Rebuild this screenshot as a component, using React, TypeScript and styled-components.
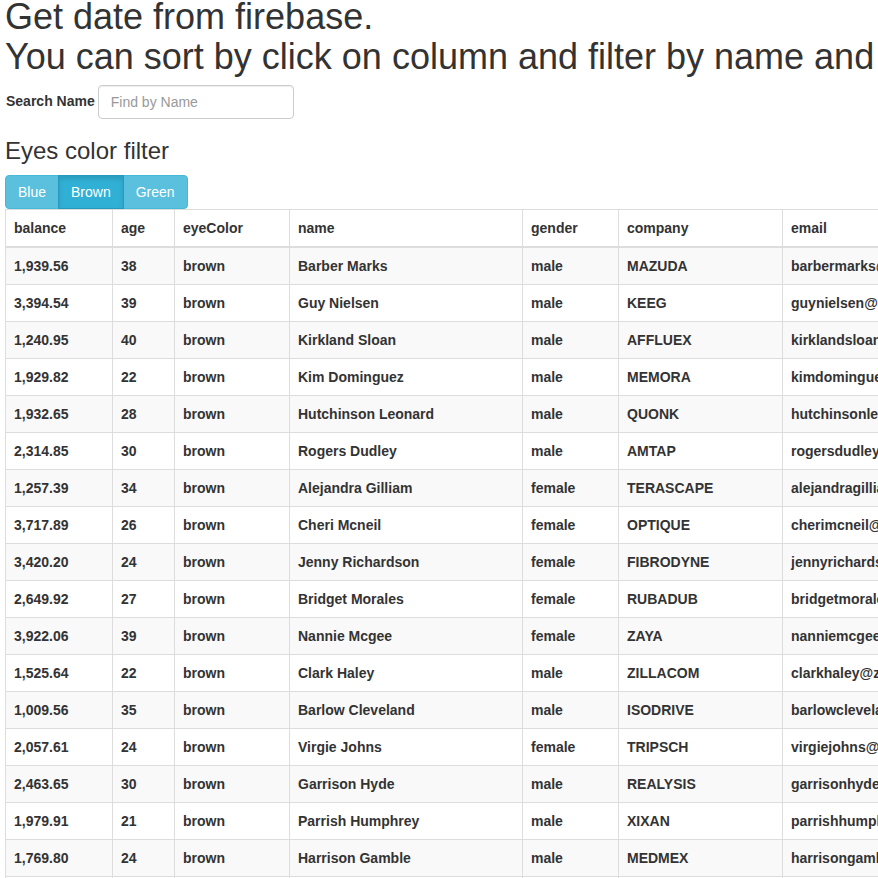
import React from "react";
import styled, { createGlobalStyle } from "styled-components";

const Global = createGlobalStyle`
  html, body { margin: 0; padding: 0; overflow: hidden; background: #fff; }
  body { font-family: "Liberation Sans", Arial, sans-serif; font-size: 14px; line-height: 1.42857; color: #333; }
  * { box-sizing: border-box; }
`;

const Page = styled.div`
  padding: 0 5px;
  width: 1400px;
`;

const Title = styled.h1`
  font-size: 36px;
  font-weight: 400;
  line-height: 1.1;
  margin: -3px 0 9px;
  white-space: nowrap;
`;

const SearchForm = styled.form`
  display: flex;
  align-items: center;
  gap: 3px;
  margin: 0;
`;

const Label = styled.label`
  font-weight: 700;
  font-size: 14px;
  padding-left: 1px;
`;

const Input = styled.input`
  width: 196px;
  height: 34px;
  padding: 6px 12px;
  font-family: inherit;
  font-size: 14px;
  color: #555;
  border: 1px solid #ccc;
  border-radius: 4px;
  box-shadow: inset 0 1px 1px rgba(0,0,0,.075);
  outline: none;
  &::placeholder { color: #999; }
`;

const SubTitle = styled.h3`
  font-size: 24px;
  font-weight: 400;
  line-height: 1.1;
  margin: 19px 0 10px;
`;

const BtnGroup = styled.div`
  display: flex;
`;

const Btn = styled.button<{ $active?: boolean }>`
  font-family: inherit;
  font-size: 14px;
  line-height: 20px;
  padding: 6px 12px;
  color: #fff;
  background: ${(p) => (p.$active ? "#31b0d5" : "#5bc0de")};
  border: 1px solid ${(p) => (p.$active ? "#269abc" : "#46b8da")};
  box-shadow: ${(p) => (p.$active ? "inset 0 3px 5px rgba(0,0,0,.125)" : "none")};
  border-radius: 0;
  margin-left: -1px;
  cursor: pointer;
  position: relative;
  z-index: ${(p) => (p.$active ? 2 : 1)};
  &:first-child { margin-left: 0; border-radius: 4px 0 0 4px; }
  &:last-child { border-radius: 0 4px 4px 0; }
`;

const Table = styled.table`
  border-collapse: collapse;
  table-layout: fixed;
  width: 1080px;
  border: 1px solid #ddd;
`;

const Col = styled.col<{ $w: number }>`
  width: ${(p) => p.$w}px;
`;

const Th = styled.th`
  text-align: left;
  font-weight: 700;
  padding: 8px;
  line-height: 20px;
  border: 1px solid #ddd;
  border-bottom: 2px solid #ddd;
  white-space: nowrap;
  overflow: hidden;
`;

const Row = styled.tr`
  &:nth-child(odd) { background: #f9f9f9; }
`;

const Td = styled.td`
  padding: 8px;
  line-height: 20px;
  font-weight: 700;
  border: 1px solid #ddd;
  white-space: nowrap;
  overflow: hidden;
`;

type P = { balance: string; age: number; name: string; gender: string; company: string };

const people: P[] = [
  { balance: "1,939.56", age: 38, name: "Barber Marks", gender: "male", company: "MAZUDA" },
  { balance: "3,394.54", age: 39, name: "Guy Nielsen", gender: "male", company: "KEEG" },
  { balance: "1,240.95", age: 40, name: "Kirkland Sloan", gender: "male", company: "AFFLUEX" },
  { balance: "1,929.82", age: 22, name: "Kim Dominguez", gender: "male", company: "MEMORA" },
  { balance: "1,932.65", age: 28, name: "Hutchinson Leonard", gender: "male", company: "QUONK" },
  { balance: "2,314.85", age: 30, name: "Rogers Dudley", gender: "male", company: "AMTAP" },
  { balance: "1,257.39", age: 34, name: "Alejandra Gilliam", gender: "female", company: "TERASCAPE" },
  { balance: "3,717.89", age: 26, name: "Cheri Mcneil", gender: "female", company: "OPTIQUE" },
  { balance: "3,420.20", age: 24, name: "Jenny Richardson", gender: "female", company: "FIBRODYNE" },
  { balance: "2,649.92", age: 27, name: "Bridget Morales", gender: "female", company: "RUBADUB" },
  { balance: "3,922.06", age: 39, name: "Nannie Mcgee", gender: "female", company: "ZAYA" },
  { balance: "1,525.64", age: 22, name: "Clark Haley", gender: "male", company: "ZILLACOM" },
  { balance: "1,009.56", age: 35, name: "Barlow Cleveland", gender: "male", company: "ISODRIVE" },
  { balance: "2,057.61", age: 24, name: "Virgie Johns", gender: "female", company: "TRIPSCH" },
  { balance: "2,463.65", age: 30, name: "Garrison Hyde", gender: "male", company: "REALYSIS" },
  { balance: "1,979.91", age: 21, name: "Parrish Humphrey", gender: "male", company: "XIXAN" },
  { balance: "1,769.80", age: 24, name: "Harrison Gamble", gender: "male", company: "MEDMEX" },
  { balance: "2,871.34", age: 31, name: "Carver Holt", gender: "male", company: "ZENTIME" },
];

const email = (p: P) => `${p.name.toLowerCase().replace(/\s+/g, "")}@${p.company.toLowerCase()}.com`;

const widths = [107, 62, 115, 233, 96, 164, 303];
const headers = ["balance", "age", "eyeColor", "name", "gender", "company", "email"];

export default function App() {
  return (
    <>
      <Global />
      <Page>
        <Title>
          Get date from firebase.
          <br />
          You can sort by click on column and filter by name and eyes color
        </Title>
        <SearchForm onSubmit={(e) => e.preventDefault()}>
          <Label htmlFor="search">Search Name</Label>
          <Input id="search" type="text" placeholder="Find by Name" />
        </SearchForm>
        <SubTitle>Eyes color filter</SubTitle>
        <BtnGroup>
          <Btn type="button">Blue</Btn>
          <Btn type="button" $active>Brown</Btn>
          <Btn type="button">Green</Btn>
        </BtnGroup>
        <Table>
          <colgroup>
            {widths.map((w, i) => (
              <Col key={i} $w={w} />
            ))}
          </colgroup>
          <thead>
            <tr>
              {headers.map((h) => (
                <Th key={h}>{h}</Th>
              ))}
            </tr>
          </thead>
          <tbody>
            {people.map((p) => (
              <Row key={p.name}>
                <Td>{p.balance}</Td>
                <Td>{p.age}</Td>
                <Td>brown</Td>
                <Td>{p.name}</Td>
                <Td>{p.gender}</Td>
                <Td>{p.company}</Td>
                <Td>{email(p)}</Td>
              </Row>
            ))}
          </tbody>
        </Table>
      </Page>
    </>
  );
}
